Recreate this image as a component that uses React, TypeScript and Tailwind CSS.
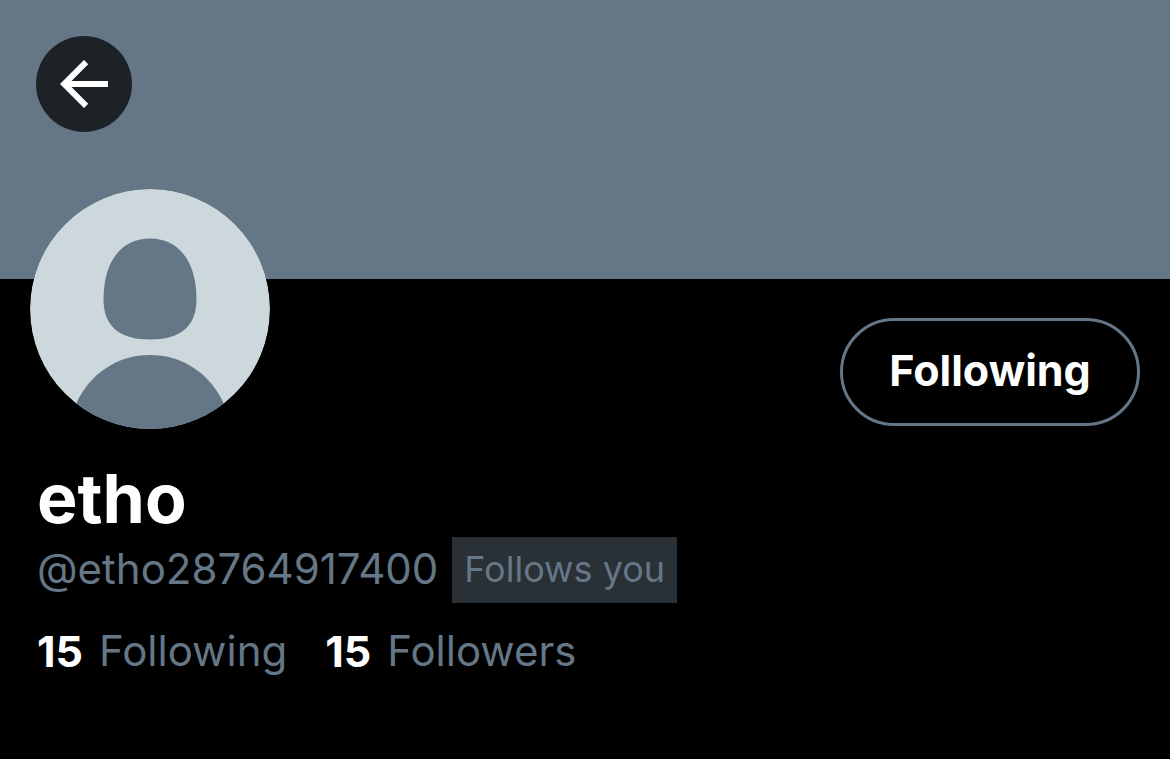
export default function App() {
  return (
    <main className="min-h-screen bg-black pb-20 font-['Inter',sans-serif] text-[#657786]">
      <header className="h-[279px] bg-[#657786] p-9">
        <button
          type="button"
          aria-label="Back"
          className="flex size-24 items-center justify-center rounded-full bg-[#1c2226] text-white"
        >
          <svg viewBox="0 0 48 48" className="size-12" fill="currentColor" aria-hidden="true">
            <path d="M48 21H11.5L28.2 4.2 24 0 0 24l24 24 4.2-4.2L11.5 27H48z" />
          </svg>
        </button>
      </header>

      <section>
        <div className="flex items-start justify-between px-[30px]">
          <svg viewBox="0 0 240 240" className="-mt-[90px] size-60 rounded-full" role="img" aria-label="Profile picture">
            <circle cx="120" cy="120" r="120" fill="#cdd8dc" />
            <path
              fill="#657786"
              d="M120 49.500C149 49.500 166.500 73 166.500 110C166.500 138 150 150.500 120 150.500C90 150.500 73.500 138 73.500 110C73.500 73 91 49.500 120 49.500Z"
            />
            <path fill="#657786" d="M46 215C60 184 88 166 120 166C152 166 180 184 194 215A120 120 0 0 1 46 215Z" />
          </svg>
          <button
            type="button"
            className="mt-[39px] h-[108px] w-[300px] rounded-full border-3 border-[#657786] pb-1 text-[43px] font-bold text-white"
          >
            Following
          </button>
        </div>

        <div className="px-[37px]">
          <h1 className="mt-[30px] text-[68px] leading-[78px] font-bold text-white">etho</h1>
          <div className="flex items-center gap-[14px]">
            <span className="pb-0.5 text-[42px] leading-[64px]">@etho28764917400</span>
            <span className="bg-[#293036] px-3 pb-0.5 text-[36px] leading-[64px]">Follows you</span>
          </div>
          <div className="mt-6 flex gap-[38px] text-[42px] leading-[48px]">
            <a href="#following" className="flex gap-4">
              <strong className="text-[43px] text-white">15</strong>
              <span>Following</span>
            </a>
            <a href="#followers" className="flex gap-4">
              <strong className="text-[43px] text-white">15</strong>
              <span>Followers</span>
            </a>
          </div>
        </div>
      </section>
    </main>
  );
}
